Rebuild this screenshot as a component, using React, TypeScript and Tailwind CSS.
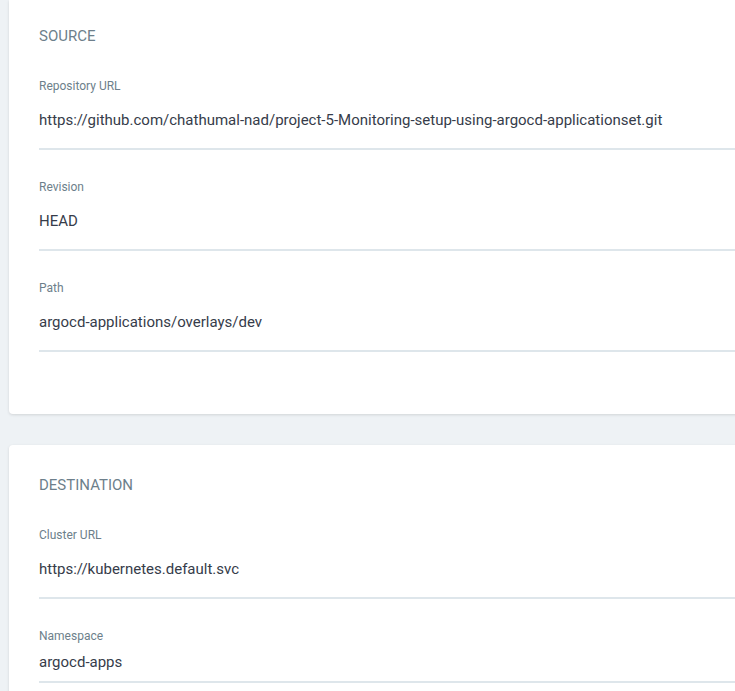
import React from "react"

type Field = { label: string; value: string; compact?: boolean }

const source: Field[] = [
  {
    label: "Repository URL",
    value: "https://github.com/chathumal-nad/project-5-Monitoring-setup-using-argocd-applicationset.git",
  },
  { label: "Revision", value: "HEAD" },
  { label: "Path", value: "argocd-applications/overlays/dev" },
]

const destination: Field[] = [
  { label: "Cluster URL", value: "https://kubernetes.default.svc" },
  { label: "Namespace", value: "argocd-apps", compact: true },
]

function FormField({ label, value, compact }: Field) {
  return (
    <div className="mt-[30px] first:mt-0">
      <div className="text-[12px] leading-[14px] text-[#6d7f8b]">{label}</div>
      <div
        className={
          compact
            ? "mt-[9px] pb-[9px] border-b-2 border-[#dee6eb] text-[15px] leading-[20px] text-[#363c4a] whitespace-nowrap"
            : "mt-[17px] pb-[18px] border-b-2 border-[#dee6eb] text-[15px] leading-[20px] text-[#363c4a] whitespace-nowrap"
        }
      >
        {value}
      </div>
    </div>
  )
}

export default function App() {
  return (
    <div
      className="h-[691px] bg-[#eef2f5] pl-[9px] overflow-hidden"
      style={{ fontFamily: "Roboto, 'Liberation Sans', sans-serif" }}
    >
      <div className="bg-white rounded-b-[4px] shadow-[0_1px_3px_rgba(0,0,0,0.12)] pl-[30px] pt-[27px] pb-[62px] -mr-[20px]">
        <h2 className="text-[15px] leading-[18px] uppercase text-[#6d7f8b]">Source</h2>
        <div className="mt-[34px]">
          {source.map((f) => (
            <FormField key={f.label} {...f} />
          ))}
        </div>
      </div>

      <div className="mt-[31px] bg-white rounded-[4px] shadow-[0_1px_3px_rgba(0,0,0,0.12)] pl-[30px] pt-[31px] pb-[40px] -mr-[20px]">
        <h2 className="text-[15px] leading-[18px] uppercase text-[#6d7f8b]">Destination</h2>
        <div className="mt-[34px]">
          {destination.map((f) => (
            <FormField key={f.label} {...f} />
          ))}
        </div>
      </div>
    </div>
  )
}
